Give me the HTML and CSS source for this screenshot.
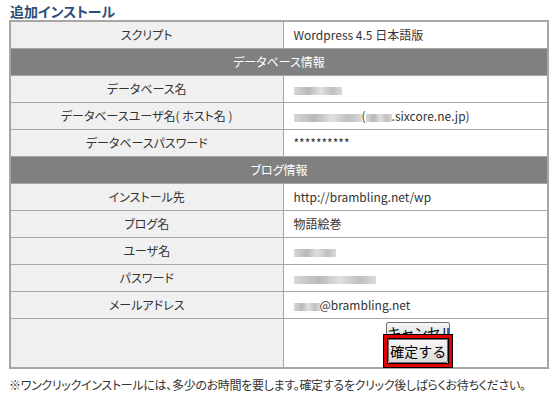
FILE: index.html
```html
<!DOCTYPE html>
<html lang="ja">
<head>
    <meta charset="UTF-8">
    <meta name="viewport" content="width=device-width, initial-scale=1.0">
    <link rel="stylesheet" href="styles.css">
</head>
<body>
    <div class="page">
        <h2 class="title">追加インストール</h2>
        <table class="install">
            <tr>
                <th>スクリプト</th>
                <td>Wordpress 4.5 日本語版</td>
            </tr>
            <tr class="section"><td colspan="2">データベース情報</td></tr>
            <tr>
                <th>データベース名</th>
                <td><span class="blur w48"></span></td>
            </tr>
            <tr>
                <th>データベースユーザ名( ホスト名 )</th>
                <td><span class="blur w68"></span>(<span class="blur w26"></span>.sixcore.ne.jp)</td>
            </tr>
            <tr>
                <th>データベースパスワード</th>
                <td>**********</td>
            </tr>
            <tr class="section"><td colspan="2">ブログ情報</td></tr>
            <tr>
                <th>インストール先</th>
                <td>http://brambling.net/wp</td>
            </tr>
            <tr>
                <th>ブログ名</th>
                <td>物語絵巻</td>
            </tr>
            <tr>
                <th>ユーザ名</th>
                <td><span class="blur w42"></span></td>
            </tr>
            <tr>
                <th>パスワード</th>
                <td><span class="blur w82"></span></td>
            </tr>
            <tr>
                <th>メールアドレス</th>
                <td><span class="blur w26"></span>@brambling.net</td>
            </tr>
            <tr class="actions">
                <th></th>
                <td>
                    <div class="buttons">
                        <button class="btn btn-cancel">キャンセル</button>
                        <span class="mark"><button class="btn btn-ok">確定する</button></span>
                    </div>
                </td>
            </tr>
        </table>
        <p class="note">※ワンクリックインストールには、多少のお時間を要します。確定するをクリック後しばらくお待ちください。</p>
    </div>
</body>
</html>
```

FILE: styles.css
```css
* {
    margin: 0;
    padding: 0;
    box-sizing: border-box;
}
body {
    background: #fff;
    color: #333;
    font-family: "Noto Sans CJK JP", "DejaVu Sans", sans-serif;
    font-size: 12px;
    font-feature-settings: "palt" 1;
}
.page {
    padding: 2px 7px 0 9px;
}
.title {
    font-size: 14px;
    font-weight: bold;
    color: #2e5077;
    line-height: 18px;
    height: 18px;
    padding-left: 1px;
}

/* table */
.install {
    width: 540px;
    border-collapse: collapse;
    border: 2px solid #a6a6a6;
}
.install th,
.install td {
    border: 1px solid #a6a6a6;
    height: 27px;
    line-height: 16px;
    font-weight: normal;
    padding: 0;
}
.install th {
    width: 273px;
    background: #f0f0f0;
    text-align: center;
}
.install td {
    background: #fff;
    padding-left: 10px;
}
.install .section td {
    background: #808080;
    color: #fff;
    text-align: center;
    padding-left: 0;
}
.blur {
    display: inline-block;
    height: 8px;
    vertical-align: -1px;
    background: linear-gradient(90deg, #d8d8d8, #b8b8b8 30%, #e0e0e0 55%, #c0c0c0 80%, #dadada);
}
.w26 { width: 26px; }
.w42 { width: 42px; }
.w48 { width: 48px; }
.w68 { width: 68px; }
.w82 { width: 82px; }

/* buttons */
.actions th,
.actions td {
    height: 49px;
}
.buttons {
    display: flex;
    flex-direction: column;
    align-items: center;
    padding-right: 4px;
    padding-top: 3px;
}
.btn {
    font-family: "Noto Sans CJK JP", sans-serif;
    font-size: 14px;
    color: #000;
    background: linear-gradient(#f6f6f6, #dcdcdc);
    border: 1px solid #707070;
    border-radius: 2px;
    padding: 0;
    overflow: hidden;
    white-space: nowrap;
}
.btn-cancel {
    width: 64px;
    height: 18px;
    line-height: 18px;
    letter-spacing: -0.8px;
}
.mark {
    position: relative;
    margin-top: -5px;
    display: inline-block;
    border: 3px solid #e00000;
    box-shadow: 0 0 0 1px #000, inset 0 0 0 1px #000;
    padding: 1px;
}
.btn-ok {
    display: block;
    width: 60px;
    height: 24px;
    line-height: 20px;
}

.note {
    margin-top: 9px;
    line-height: 14px;
    letter-spacing: -0.3px;
}
```
